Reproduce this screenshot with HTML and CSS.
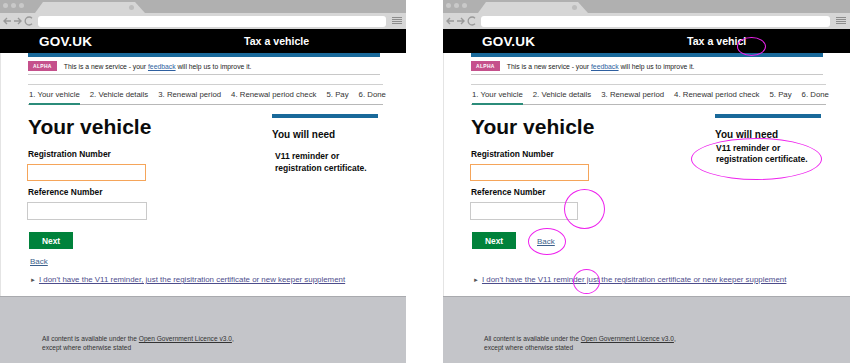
FILE: index.html
```html
<!DOCTYPE html>
<html lang="en">
<head>
    <meta charset="UTF-8">
    <meta name="viewport" content="width=device-width, initial-scale=1.0">
    <title>Tax a vehicle - comparison</title>
    <link rel="stylesheet" href="styles.css">
</head>
<body>

<div class="desk">

    <!-- Left window: the design -->
    <div class="window">
        <div class="chrome">
            <div class="tabbar">
                <span class="lights"><i></i><i></i><i></i></span>
                <div class="tab"><i class="tab-dot"></i></div>
            </div>
            <div class="toolbar">
                <svg class="nav-icons" width="32" height="10" viewBox="0 0 32 10">
                    <path d="M9 5H2M5 2L2 5L5 8" fill="none" stroke="#999" stroke-width="1.4"/>
                    <path d="M12 5H19M16 2L19 5L16 8" fill="none" stroke="#999" stroke-width="1.4"/>
                    <path d="M30 2.2A4 4 0 1 0 30 7.8" fill="none" stroke="#999" stroke-width="1.3"/>
                </svg>
                <div class="address"></div>
                <svg class="menu" width="10" height="8" viewBox="0 0 10 8">
                    <path d="M0 0.5H10M0 2.5H10M0 4.5H10M0 6.5H10" stroke="#8c8c8c" stroke-width="1"/>
                </svg>
            </div>
        </div>

        <div class="page">
            <header class="masthead">
                <span class="logo">GOV.UK</span>
                <span class="service">Tax a vehicle</span>
            </header>

            <div class="content">
                <div class="container">
                    <div class="phase">
                        <strong class="phase-tag">ALPHA</strong>
                        <span>This is a new service - your <a href="#">feedback</a> will help us to improve it.</span>
                    </div>

                    <nav class="steps">
                        <span class="step active">1. Your vehicle</span>
                        <span class="step">2. Vehicle details</span>
                        <span class="step">3. Renewal period</span>
                        <span class="step">4. Renewal period check</span>
                        <span class="step">5. Pay</span>
                        <span class="step">6. Done</span>
                    </nav>

                    <div class="columns">
                        <div class="main">
                            <h1>Your vehicle</h1>
                            <label class="label">Registration Number</label>
                            <input class="field focus" type="text">
                            <label class="label">Reference Number</label>
                            <input class="field" type="text">
                            <div class="actions">
                                <button class="button">Next</button>
                            </div>
                            <a class="back" href="#">Back</a>
                            <p class="details"><span class="arrow">&#9658;</span><a href="#">I don't have the V11 reminder, just the regisitration certificate or new keeper supplement</a></p>
                        </div>
                        <aside class="aside">
                            <h2>You will need</h2>
                            <p>V11 reminder or<br>registration certificate.</p>
                        </aside>
                    </div>
                </div>
            </div>

            <footer class="footer">
                <p>All content is available under the <a href="#">Open Government Licence v3.0</a>,<br>except where otherwise stated</p>
            </footer>
        </div>
    </div>

    <!-- Right window: the build, with review marks -->
    <div class="window build">
        <div class="chrome">
            <div class="tabbar">
                <span class="lights"><i></i><i></i><i></i></span>
                <div class="tab"><i class="tab-dot"></i></div>
            </div>
            <div class="toolbar">
                <svg class="nav-icons" width="32" height="10" viewBox="0 0 32 10">
                    <path d="M9 5H2M5 2L2 5L5 8" fill="none" stroke="#999" stroke-width="1.4"/>
                    <path d="M12 5H19M16 2L19 5L16 8" fill="none" stroke="#999" stroke-width="1.4"/>
                    <path d="M30 2.2A4 4 0 1 0 30 7.8" fill="none" stroke="#999" stroke-width="1.3"/>
                </svg>
                <div class="address"></div>
                <svg class="menu" width="10" height="8" viewBox="0 0 10 8">
                    <path d="M0 0.5H10M0 2.5H10M0 4.5H10M0 6.5H10" stroke="#8c8c8c" stroke-width="1"/>
                </svg>
            </div>
        </div>

        <div class="page">
            <header class="masthead">
                <span class="logo">GOV.UK</span>
                <span class="service">Tax a vehicl</span>
            </header>

            <div class="content">
                <div class="container">
                    <div class="phase">
                        <strong class="phase-tag">ALPHA</strong>
                        <span>This is a new service - your <a href="#">feedback</a> will help us to improve it.</span>
                    </div>

                    <nav class="steps">
                        <span class="step active">1. Your vehicle</span>
                        <span class="step">2. Vehicle details</span>
                        <span class="step">3. Renewal period</span>
                        <span class="step">4. Renewal period check</span>
                        <span class="step">5. Pay</span>
                        <span class="step">6. Done</span>
                    </nav>

                    <div class="columns">
                        <div class="main">
                            <h1>Your vehicle</h1>
                            <label class="label">Registration Number</label>
                            <input class="field focus" type="text">
                            <label class="label">Reference Number</label>
                            <input class="field short" type="text">
                            <div class="actions">
                                <button class="button">Next</button>
                                <a class="back" href="#">Back</a>
                            </div>
                            <p class="details"><span class="arrow">&#9658;</span><a href="#">I don't have the V11 reminder just the regisitration certificate or new keeper supplement</a></p>
                        </div>
                        <aside class="aside">
                            <h2>You will need</h2>
                            <p>V11 reminder or<br>registration certificate.</p>
                        </aside>
                    </div>
                </div>
            </div>

            <footer class="footer">
                <p>All content is available under the <a href="#">Open Government Licence v3.0</a>,<br>except where otherwise stated</p>
            </footer>
        </div>

        <!-- review marks -->
        <span class="mark mark-title"></span>
        <span class="mark mark-need"></span>
        <span class="mark mark-field"></span>
        <span class="mark mark-back"></span>
        <span class="mark mark-comma"></span>
    </div>

</div>

</body>
</html>
```

FILE: styles.css
```css
body {
    margin: 0;
    font-family: "Liberation Sans", Arial, sans-serif;
    background: #fff;
    color: #0b0c0c;
}

.desk {
    display: grid;
    grid-template-columns: 406px 407px;
    column-gap: 37px;
    height: 363px;
    overflow: hidden;
}

.window {
    position: relative;
    display: flex;
    flex-direction: column;
    height: 363px;
}

/* browser chrome */
.tabbar {
    position: relative;
    height: 13px;
    background: #b0b0b0;
}

.lights {
    display: flex;
    gap: 3px;
    padding: 3px 0 0 3px;
}

.lights i {
    width: 5px;
    height: 5px;
    border-radius: 50%;
    background: #c9c9c9;
}

.tab {
    position: absolute;
    left: 35px;
    bottom: 0;
    width: 110px;
    height: 11px;
    background: #d6d6d6;
    clip-path: polygon(0 100%, 8px 0, 100px 0, 100% 100%);
}

.tab-dot {
    position: absolute;
    left: 94px;
    top: 3px;
    width: 5px;
    height: 5px;
    border-radius: 50%;
    background: #bdbdbd;
}

.toolbar {
    display: flex;
    align-items: center;
    height: 16px;
    padding: 0 4px 0 2px;
    background: #d6d6d6;
    gap: 4px;
}

.nav-icons {
    flex: none;
}

.address {
    flex: 1;
    height: 11px;
    background: #fff;
    border-radius: 3px;
}

.menu {
    flex: none;
    margin-left: 2px;
}

/* page */
.page {
    flex: 1;
    display: flex;
    flex-direction: column;
}

.masthead {
    display: flex;
    align-items: center;
    height: 24px;
    padding-left: 39px;
    background: #000;
    color: #fff;
    font-weight: bold;
}

.logo {
    width: 205px;
    font-size: 13.5px;
    letter-spacing: 0.2px;
}

.service {
    font-size: 10.6px;
}

.content {
    background: #fff;
    box-shadow: inset 1px 0 #e4e4e4;
    padding-bottom: 11px;
}

.container {
    width: 352px;
    margin-left: 28px;
    border-top: 4px solid #19699a;
}

.phase {
    display: flex;
    align-items: center;
    gap: 7px;
    padding: 4px 0 3px;
    border-bottom: 1px solid #c8c8c8;
    font-size: 6.8px;
    color: #222;
}

.phase-tag {
    display: inline-block;
    padding: 2px 5px;
    background: #c5508c;
    color: #fff;
    font-size: 5px;
    letter-spacing: 0.3px;
}

.phase a {
    color: #2e5fa0;
}

.steps {
    display: flex;
    gap: 10px;
    width: 355px;
    height: 21px;
    margin-top: 9px;
    padding-left: 1px;
    border-top: 1px solid #d0d0d0;
    border-bottom: 1px solid #b8b8b8;
    font-size: 7.8px;
    color: #333;
    white-space: nowrap;
    box-sizing: border-box;
}

.step {
    display: flex;
    align-items: center;
}

.step.active {
    border-bottom: 2px solid #2b8c7a;
    margin-bottom: -1px;
}

.columns {
    display: grid;
    grid-template-columns: 244px 106px;
}

.main {
    display: flex;
    flex-direction: column;
    align-items: flex-start;
}

h1 {
    margin: 10px 0 0;
    font-size: 21px;
    line-height: 24px;
}

.label {
    margin-top: 10px;
    font-size: 8.4px;
    line-height: 10px;
    font-weight: bold;
}

.label + .field {
    margin-top: 5px;
}

.field + .label {
    margin-top: 6px;
}

.field {
    width: 120px;
    height: 18px;
    margin: 0 0 0 -1px;
    padding: 0;
    border: 1.5px solid #cacaca;
    box-sizing: border-box;
    background: #fff;
}

.field.focus {
    width: 119px;
    height: 17px;
    border-color: #f5a55a;
}

.field.short {
    width: 108px;
}

.actions {
    display: flex;
    align-items: center;
    gap: 21px;
    margin-top: 12px;
    padding-left: 1px;
}

.button {
    width: 44px;
    height: 17px;
    padding: 0;
    border: none;
    background: #00823b;
    color: #fff;
    font-family: inherit;
    font-size: 8.4px;
    font-weight: bold;
}

.back {
    margin-top: 8px;
    margin-left: 2px;
    font-size: 8px;
    line-height: 10px;
    color: #3b5f8c;
}

.actions .back {
    margin: 3px 0 0;
}

.details {
    margin: 8px 0 0 2px;
    font-size: 7.9px;
    line-height: 10px;
    color: #555;
    white-space: nowrap;
}

.details .arrow {
    font-size: 6px;
    margin-right: 3px;
}

.details a {
    color: #4d4d8c;
}

.build .details {
    margin-top: 26px;
}

.aside {
    border-top: 4px solid #19699a;
    margin-top: 9px;
    align-self: start;
}

.aside h2 {
    margin: 11px 0 0;
    font-size: 10px;
    line-height: 12px;
}

.aside p {
    margin: 9px 0 0 3px;
    font-size: 8.5px;
    line-height: 12px;
    font-weight: bold;
}

.build .aside p {
    margin: 2px 0 0 1px;
    line-height: 11px;
}

.footer {
    flex: 1;
    background: #c4c5c9;
    border-top: 1px solid #a9aaae;
}

.footer p {
    margin: 38px 0 0 42px;
    font-size: 6.6px;
    line-height: 8.7px;
    color: #333;
}

.build .footer p {
    margin-left: 41px;
}

.footer a {
    color: #333;
}

/* review marks on the build */
.mark {
    position: absolute;
    border: 1px solid #ee22ee;
    border-radius: 50%;
}

.mark-title { left: 294px; top: 37px; width: 27px; height: 17px; }
.mark-need { left: 248px; top: 138px; width: 129px; height: 40px; }
.mark-field { left: 121px; top: 189px; width: 39px; height: 38px; }
.mark-back { left: 85px; top: 228px; width: 36px; height: 25px; }
.mark-comma { left: 130px; top: 269px; width: 25px; height: 23px; }
```
